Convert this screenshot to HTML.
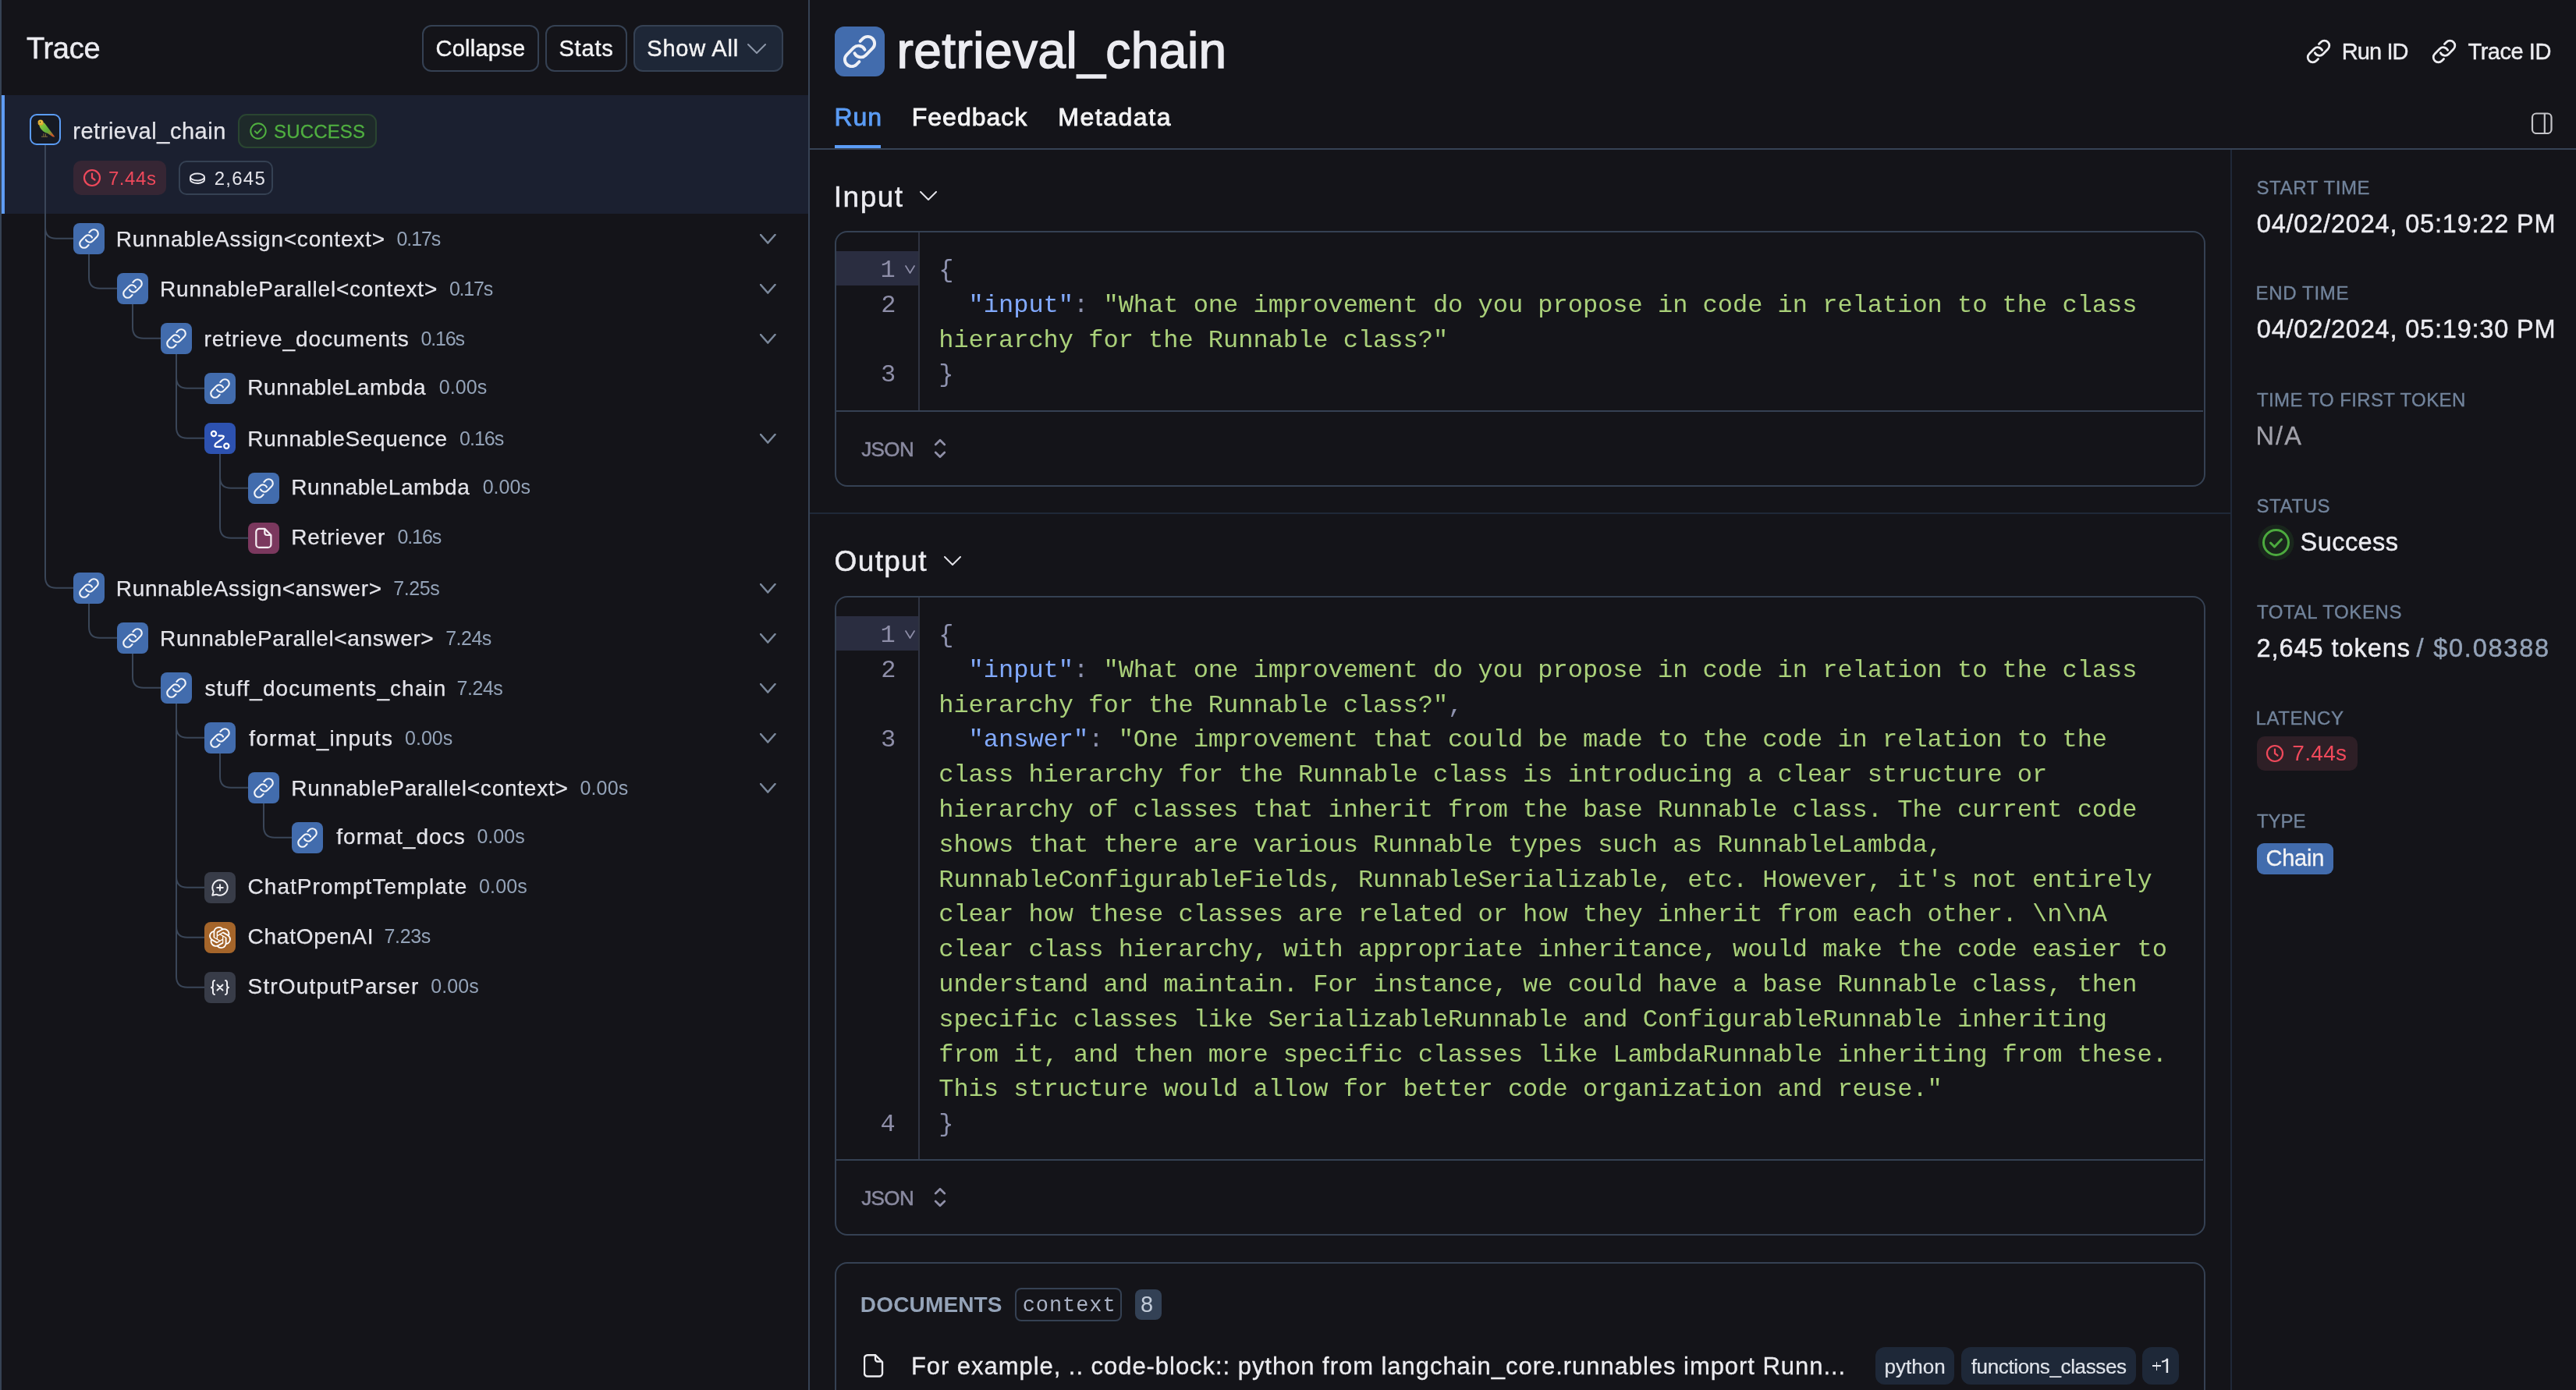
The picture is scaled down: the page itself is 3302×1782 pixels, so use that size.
<!DOCTYPE html>
<html><head><meta charset="utf-8"><style>
html,body{margin:0;padding:0;background:#141419;}
body{width:3302px;height:1782px;position:relative;overflow:hidden;font-family:"Liberation Sans",sans-serif;-webkit-font-smoothing:antialiased;}
</style></head><body><div style="position:absolute;left:0;top:0;width:3302px;height:1782px;will-change:transform;">
<div style="position:absolute;left:0px;top:0px;width:2px;height:1782px;background:#364254;"></div><div style="position:absolute;left:33.95px;top:42.93px;font-family:'Liberation Sans', sans-serif;font-size:38px;line-height:38px;color:#ececf1;white-space:pre;letter-spacing:-0.262px;-webkit-text-stroke:0.5px #ececf1;">Trace</div><div style="position:absolute;left:541px;top:32px;width:150px;height:60px;box-sizing:border-box;border:2px solid #354153;border-radius:12px;"></div><div style="position:absolute;left:558.50px;top:47.95px;font-family:'Liberation Sans', sans-serif;font-size:29px;line-height:29px;color:#f4f4f5;white-space:pre;letter-spacing:0.250px;-webkit-text-stroke:0.4px #f4f4f5;">Collapse</div><div style="position:absolute;left:699px;top:32px;width:105px;height:60px;box-sizing:border-box;border:2px solid #354153;border-radius:12px;"></div><div style="position:absolute;left:716.45px;top:47.95px;font-family:'Liberation Sans', sans-serif;font-size:29px;line-height:29px;color:#f4f4f5;white-space:pre;letter-spacing:0.812px;-webkit-text-stroke:0.4px #f4f4f5;">Stats</div><div style="position:absolute;left:812px;top:32px;width:192px;height:60px;box-sizing:border-box;border:2px solid #354153;border-radius:12px;background:#1e2737;"></div><div style="position:absolute;left:829.25px;top:47.95px;font-family:'Liberation Sans', sans-serif;font-size:29px;line-height:29px;color:#f4f4f5;white-space:pre;letter-spacing:0.800px;-webkit-text-stroke:0.4px #f4f4f5;">Show All</div><svg style="position:absolute;left:958px;top:56px;" width="24" height="13" viewBox="0 0 24 13" fill="none"><path d="M1 1 L12.0 12 L23 1" stroke="#8c96a8" stroke-width="2" stroke-linecap="round" stroke-linejoin="round"/></svg><div style="position:absolute;left:2px;top:122px;width:1034px;height:152px;background:#1b2030;"></div><div style="position:absolute;left:2px;top:122px;width:4px;height:152px;background:#5f9cf3;"></div><div style="position:absolute;left:38px;top:146px;width:40px;height:40px;box-sizing:border-box;border:2px solid #5b9cf5;border-radius:9px;background:#161a24;"></div><svg style="position:absolute;left:44px;top:150px;" width="30" height="30" viewBox="0 0 30 30" fill="none"><defs><linearGradient id="pg" x1="0" y1="0" x2="1" y2="1"><stop offset="0" stop-color="#9ccf3c"/><stop offset="0.55" stop-color="#5fae3a"/><stop offset="1" stop-color="#c8632a"/></linearGradient><radialGradient id="ph" cx="0.5" cy="0.4" r="0.6"><stop offset="0" stop-color="#f3d54a"/><stop offset="1" stop-color="#d99a2c"/></radialGradient></defs><path d="M6 9 C8 6 12 6 14 9 L20 17 L26 25 L24 25.5 L17 21 C13 20 9 17 7 13 Z" fill="url(#pg)"/><circle cx="8" cy="7.2" r="3.6" fill="url(#ph)"/><path d="M4.6 6.6 C3.4 6.8 3 8.5 3.8 9.6 L5.2 8.2 Z" fill="#3a3a3a"/><circle cx="7.6" cy="6.6" r="0.8" fill="#222"/><path d="M20 20 L26.5 26 L22 24 Z" fill="#d8452a"/><path d="M9 25.2 H17" stroke="#7d6a3a" stroke-width="1.1"/><path d="M12 21 V25 M14.5 21.5 V25" stroke="#8a7640" stroke-width="0.9"/></svg><div style="position:absolute;left:93.25px;top:154.45px;font-family:'Liberation Sans', sans-serif;font-size:29px;line-height:29px;color:#e4e4ea;white-space:pre;letter-spacing:0.536px;-webkit-text-stroke:0.25px #e4e4ea;">retrieval_chain</div><div style="position:absolute;left:305px;top:146px;width:178px;height:44px;box-sizing:border-box;border:2px solid #2a4531;border-radius:11px;background:#1e2a2a;"></div><svg style="position:absolute;left:319px;top:156px;" width="24" height="24" viewBox="0 0 24 24" fill="none"><circle cx="12" cy="12" r="9.7" stroke="#50b040" stroke-width="2"/><path d="M7.8 12.3 l2.8 2.8 l5.4 -5.6" stroke="#50b040" stroke-width="2" stroke-linecap="round" stroke-linejoin="round"/></svg><div style="position:absolute;left:351.00px;top:156.68px;font-family:'Liberation Sans', sans-serif;font-size:24px;line-height:24px;color:#50b040;white-space:pre;letter-spacing:0.167px;-webkit-text-stroke:0.3px #50b040;">SUCCESS</div><div style="position:absolute;left:94px;top:206px;width:119px;height:44px;border-radius:10px;background:#362634;"></div><svg style="position:absolute;left:106px;top:216px;" width="24" height="24" viewBox="0 0 24 24" fill="none"><circle cx="12" cy="12" r="10" stroke="#f0495b" stroke-width="2.2"/><path d="M12 6.5 V12 L15.5 14.5" stroke="#f0495b" stroke-width="2.2" stroke-linecap="round"/></svg><div style="position:absolute;left:138.95px;top:216.88px;font-family:'Liberation Sans', sans-serif;font-size:24px;line-height:24px;color:#f0495b;white-space:pre;letter-spacing:0.562px;">7.44s</div><div style="position:absolute;left:229px;top:206px;width:121px;height:44px;box-sizing:border-box;border:2px solid #354153;border-radius:10px;"></div><svg style="position:absolute;left:242px;top:218px;" width="22" height="22" viewBox="0 0 22 22" fill="none"><ellipse cx="11" cy="9" rx="9" ry="4.5" stroke="#e4e4ea" stroke-width="2"/><path d="M2 9 v3.5 c0 2.5 4 4.5 9 4.5 s9 -2 9 -4.5 V9" stroke="#e4e4ea" stroke-width="2"/></svg><div style="position:absolute;left:274.75px;top:216.88px;font-family:'Liberation Sans', sans-serif;font-size:24px;line-height:24px;color:#e4e4ea;white-space:pre;letter-spacing:1.250px;">2,645</div><svg style="position:absolute;left:0px;top:0px;" width="1036" height="1782" viewBox="0 0 1036 1782" fill="none"><path d="M58 186 V291.7 Q58 305.7 72 305.7 H94" stroke="#3a4658" stroke-width="2" fill="none"/><path d="M114 325.7 V355.7 Q114 369.7 128 369.7 H150" stroke="#3a4658" stroke-width="2" fill="none"/><path d="M170 389.7 V419.7 Q170 433.7 184 433.7 H206" stroke="#3a4658" stroke-width="2" fill="none"/><path d="M226 453.7 V483.7 Q226 497.7 240 497.7 H262" stroke="#3a4658" stroke-width="2" fill="none"/><path d="M226 453.7 V547.7 Q226 561.7 240 561.7 H262" stroke="#3a4658" stroke-width="2" fill="none"/><path d="M282 581.7 V611.7 Q282 625.7 296 625.7 H318" stroke="#3a4658" stroke-width="2" fill="none"/><path d="M282 581.7 V675.7 Q282 689.7 296 689.7 H318" stroke="#3a4658" stroke-width="2" fill="none"/><path d="M58 186 V739.7 Q58 753.7 72 753.7 H94" stroke="#3a4658" stroke-width="2" fill="none"/><path d="M114 773.7 V803.7 Q114 817.7 128 817.7 H150" stroke="#3a4658" stroke-width="2" fill="none"/><path d="M170 837.7 V867.7 Q170 881.7 184 881.7 H206" stroke="#3a4658" stroke-width="2" fill="none"/><path d="M226 901.7 V931.7 Q226 945.7 240 945.7 H262" stroke="#3a4658" stroke-width="2" fill="none"/><path d="M282 965.7 V995.7 Q282 1009.7 296 1009.7 H318" stroke="#3a4658" stroke-width="2" fill="none"/><path d="M338 1029.7 V1059.7 Q338 1073.7 352 1073.7 H374" stroke="#3a4658" stroke-width="2" fill="none"/><path d="M226 901.7 V1123.7 Q226 1137.7 240 1137.7 H262" stroke="#3a4658" stroke-width="2" fill="none"/><path d="M226 901.7 V1187.7 Q226 1201.7 240 1201.7 H262" stroke="#3a4658" stroke-width="2" fill="none"/><path d="M226 901.7 V1251.7 Q226 1265.7 240 1265.7 H262" stroke="#3a4658" stroke-width="2" fill="none"/></svg><svg style="position:absolute;left:94px;top:286px" width="40" height="40" viewBox="0 0 40 40"><rect width="40" height="40" rx="8" fill="#426cad"/><svg x="5.5" y="5.5" width="29" height="29" viewBox="0 0 24 24"><path transform="matrix(0 -1 -1 0 24 24)" fill="none" d="M13.19 8.688a4.5 4.5 0 0 1 1.242 7.244l-4.5 4.5a4.5 4.5 0 0 1-6.364-6.364l1.757-1.757m13.35-.622 1.757-1.757a4.5 4.5 0 0 0-6.364-6.364l-4.5 4.5a4.5 4.5 0 0 0 1.242 7.244" stroke="#f2f4f8" stroke-width="1.8" stroke-linecap="round" stroke-linejoin="round"/></svg></svg><div style="position:absolute;left:148.85px;top:292.89px;font-family:'Liberation Sans', sans-serif;font-size:28px;line-height:28px;color:#e4e4ea;white-space:pre;letter-spacing:0.784px;-webkit-text-stroke:0.25px #e4e4ea;">RunnableAssign&lt;context&gt;</div><div style="position:absolute;left:508.60px;top:294.13px;font-family:'Liberation Sans', sans-serif;font-size:25px;line-height:25px;color:#94a3b8;white-space:pre;letter-spacing:-1.150px;">0.17s</div><svg style="position:absolute;left:974px;top:300px;" width="20.5" height="12.5" viewBox="0 0 20.5 12.5" fill="none"><path d="M1 1 L10.25 11.5 L19.5 1" stroke="#7b889b" stroke-width="2.6" stroke-linecap="round" stroke-linejoin="round"/></svg><svg style="position:absolute;left:150px;top:350px" width="40" height="40" viewBox="0 0 40 40"><rect width="40" height="40" rx="8" fill="#426cad"/><svg x="5.5" y="5.5" width="29" height="29" viewBox="0 0 24 24"><path transform="matrix(0 -1 -1 0 24 24)" fill="none" d="M13.19 8.688a4.5 4.5 0 0 1 1.242 7.244l-4.5 4.5a4.5 4.5 0 0 1-6.364-6.364l1.757-1.757m13.35-.622 1.757-1.757a4.5 4.5 0 0 0-6.364-6.364l-4.5 4.5a4.5 4.5 0 0 0 1.242 7.244" stroke="#f2f4f8" stroke-width="1.8" stroke-linecap="round" stroke-linejoin="round"/></svg></svg><div style="position:absolute;left:205.05px;top:356.89px;font-family:'Liberation Sans', sans-serif;font-size:28px;line-height:28px;color:#e4e4ea;white-space:pre;letter-spacing:0.790px;-webkit-text-stroke:0.25px #e4e4ea;">RunnableParallel&lt;context&gt;</div><div style="position:absolute;left:575.90px;top:358.13px;font-family:'Liberation Sans', sans-serif;font-size:25px;line-height:25px;color:#94a3b8;white-space:pre;letter-spacing:-1.200px;">0.17s</div><svg style="position:absolute;left:974px;top:364px;" width="20.5" height="12.5" viewBox="0 0 20.5 12.5" fill="none"><path d="M1 1 L10.25 11.5 L19.5 1" stroke="#7b889b" stroke-width="2.6" stroke-linecap="round" stroke-linejoin="round"/></svg><svg style="position:absolute;left:206px;top:414px" width="40" height="40" viewBox="0 0 40 40"><rect width="40" height="40" rx="8" fill="#426cad"/><svg x="5.5" y="5.5" width="29" height="29" viewBox="0 0 24 24"><path transform="matrix(0 -1 -1 0 24 24)" fill="none" d="M13.19 8.688a4.5 4.5 0 0 1 1.242 7.244l-4.5 4.5a4.5 4.5 0 0 1-6.364-6.364l1.757-1.757m13.35-.622 1.757-1.757a4.5 4.5 0 0 0-6.364-6.364l-4.5 4.5a4.5 4.5 0 0 0 1.242 7.244" stroke="#f2f4f8" stroke-width="1.8" stroke-linecap="round" stroke-linejoin="round"/></svg></svg><div style="position:absolute;left:261.55px;top:420.89px;font-family:'Liberation Sans', sans-serif;font-size:28px;line-height:28px;color:#e4e4ea;white-space:pre;letter-spacing:0.956px;-webkit-text-stroke:0.25px #e4e4ea;">retrieve_documents</div><div style="position:absolute;left:539.50px;top:422.13px;font-family:'Liberation Sans', sans-serif;font-size:25px;line-height:25px;color:#94a3b8;white-space:pre;letter-spacing:-1.150px;">0.16s</div><svg style="position:absolute;left:974px;top:428px;" width="20.5" height="12.5" viewBox="0 0 20.5 12.5" fill="none"><path d="M1 1 L10.25 11.5 L19.5 1" stroke="#7b889b" stroke-width="2.6" stroke-linecap="round" stroke-linejoin="round"/></svg><svg style="position:absolute;left:262px;top:478px" width="40" height="40" viewBox="0 0 40 40"><rect width="40" height="40" rx="8" fill="#426cad"/><svg x="5.5" y="5.5" width="29" height="29" viewBox="0 0 24 24"><path transform="matrix(0 -1 -1 0 24 24)" fill="none" d="M13.19 8.688a4.5 4.5 0 0 1 1.242 7.244l-4.5 4.5a4.5 4.5 0 0 1-6.364-6.364l1.757-1.757m13.35-.622 1.757-1.757a4.5 4.5 0 0 0-6.364-6.364l-4.5 4.5a4.5 4.5 0 0 0 1.242 7.244" stroke="#f2f4f8" stroke-width="1.8" stroke-linecap="round" stroke-linejoin="round"/></svg></svg><div style="position:absolute;left:317.25px;top:482.99px;font-family:'Liberation Sans', sans-serif;font-size:28px;line-height:28px;color:#e4e4ea;white-space:pre;letter-spacing:0.562px;-webkit-text-stroke:0.25px #e4e4ea;">RunnableLambda</div><div style="position:absolute;left:562.70px;top:483.93px;font-family:'Liberation Sans', sans-serif;font-size:25px;line-height:25px;color:#94a3b8;white-space:pre;letter-spacing:0.100px;">0.00s</div><svg style="position:absolute;left:262px;top:542px" width="40" height="40" viewBox="0 0 40 40"><rect width="40" height="40" rx="8" fill="#2d52b0"/><g fill="none" stroke="#fff" stroke-width="2.2" stroke-linecap="round" stroke-linejoin="round"><circle cx="12" cy="14" r="3.1"/><circle cx="28.3" cy="29.8" r="3.1"/><path d="M18.4 16.6 H22.6 Q26.4 16.8 23.8 19.8 L14.6 26.6 Q11.6 30.8 15.6 30.9 H21.6"/></g></svg><div style="position:absolute;left:317.25px;top:548.89px;font-family:'Liberation Sans', sans-serif;font-size:28px;line-height:28px;color:#e4e4ea;white-space:pre;letter-spacing:0.663px;-webkit-text-stroke:0.25px #e4e4ea;">RunnableSequence</div><div style="position:absolute;left:589.10px;top:550.13px;font-family:'Liberation Sans', sans-serif;font-size:25px;line-height:25px;color:#94a3b8;white-space:pre;letter-spacing:-1.025px;">0.16s</div><svg style="position:absolute;left:974px;top:556px;" width="20.5" height="12.5" viewBox="0 0 20.5 12.5" fill="none"><path d="M1 1 L10.25 11.5 L19.5 1" stroke="#7b889b" stroke-width="2.6" stroke-linecap="round" stroke-linejoin="round"/></svg><svg style="position:absolute;left:318px;top:606px" width="40" height="40" viewBox="0 0 40 40"><rect width="40" height="40" rx="8" fill="#426cad"/><svg x="5.5" y="5.5" width="29" height="29" viewBox="0 0 24 24"><path transform="matrix(0 -1 -1 0 24 24)" fill="none" d="M13.19 8.688a4.5 4.5 0 0 1 1.242 7.244l-4.5 4.5a4.5 4.5 0 0 1-6.364-6.364l1.757-1.757m13.35-.622 1.757-1.757a4.5 4.5 0 0 0-6.364-6.364l-4.5 4.5a4.5 4.5 0 0 0 1.242 7.244" stroke="#f2f4f8" stroke-width="1.8" stroke-linecap="round" stroke-linejoin="round"/></svg></svg><div style="position:absolute;left:373.25px;top:610.99px;font-family:'Liberation Sans', sans-serif;font-size:28px;line-height:28px;color:#e4e4ea;white-space:pre;letter-spacing:0.577px;-webkit-text-stroke:0.25px #e4e4ea;">RunnableLambda</div><div style="position:absolute;left:618.70px;top:611.93px;font-family:'Liberation Sans', sans-serif;font-size:25px;line-height:25px;color:#94a3b8;white-space:pre;letter-spacing:0.025px;">0.00s</div><svg style="position:absolute;left:318px;top:670px" width="40" height="40" viewBox="0 0 40 40"><rect width="40" height="40" rx="8" fill="#7b385e"/><g fill="none" stroke="#f6eef3" stroke-width="2.2" stroke-linejoin="round"><path d="M14.3 7.9 H21.3 L29.4 16 V27.9 a4 4 0 0 1 -4 4 H14.3 a4 4 0 0 1 -4 -4 V11.9 a4 4 0 0 1 4 -4 Z"/><path d="M21.3 8.2 V13 a3 3 0 0 0 3 3 H29.2"/></g></svg><div style="position:absolute;left:373.25px;top:674.99px;font-family:'Liberation Sans', sans-serif;font-size:28px;line-height:28px;color:#e4e4ea;white-space:pre;letter-spacing:0.812px;-webkit-text-stroke:0.25px #e4e4ea;">Retriever</div><div style="position:absolute;left:509.40px;top:675.93px;font-family:'Liberation Sans', sans-serif;font-size:25px;line-height:25px;color:#94a3b8;white-space:pre;letter-spacing:-1.075px;">0.16s</div><svg style="position:absolute;left:94px;top:734px" width="40" height="40" viewBox="0 0 40 40"><rect width="40" height="40" rx="8" fill="#426cad"/><svg x="5.5" y="5.5" width="29" height="29" viewBox="0 0 24 24"><path transform="matrix(0 -1 -1 0 24 24)" fill="none" d="M13.19 8.688a4.5 4.5 0 0 1 1.242 7.244l-4.5 4.5a4.5 4.5 0 0 1-6.364-6.364l1.757-1.757m13.35-.622 1.757-1.757a4.5 4.5 0 0 0-6.364-6.364l-4.5 4.5a4.5 4.5 0 0 0 1.242 7.244" stroke="#f2f4f8" stroke-width="1.8" stroke-linecap="round" stroke-linejoin="round"/></svg></svg><div style="position:absolute;left:148.85px;top:740.89px;font-family:'Liberation Sans', sans-serif;font-size:28px;line-height:28px;color:#e4e4ea;white-space:pre;letter-spacing:0.636px;-webkit-text-stroke:0.25px #e4e4ea;">RunnableAssign&lt;answer&gt;</div><div style="position:absolute;left:504.35px;top:742.13px;font-family:'Liberation Sans', sans-serif;font-size:25px;line-height:25px;color:#94a3b8;white-space:pre;letter-spacing:-0.412px;">7.25s</div><svg style="position:absolute;left:974px;top:748px;" width="20.5" height="12.5" viewBox="0 0 20.5 12.5" fill="none"><path d="M1 1 L10.25 11.5 L19.5 1" stroke="#7b889b" stroke-width="2.6" stroke-linecap="round" stroke-linejoin="round"/></svg><svg style="position:absolute;left:150px;top:798px" width="40" height="40" viewBox="0 0 40 40"><rect width="40" height="40" rx="8" fill="#426cad"/><svg x="5.5" y="5.5" width="29" height="29" viewBox="0 0 24 24"><path transform="matrix(0 -1 -1 0 24 24)" fill="none" d="M13.19 8.688a4.5 4.5 0 0 1 1.242 7.244l-4.5 4.5a4.5 4.5 0 0 1-6.364-6.364l1.757-1.757m13.35-.622 1.757-1.757a4.5 4.5 0 0 0-6.364-6.364l-4.5 4.5a4.5 4.5 0 0 0 1.242 7.244" stroke="#f2f4f8" stroke-width="1.8" stroke-linecap="round" stroke-linejoin="round"/></svg></svg><div style="position:absolute;left:205.05px;top:804.89px;font-family:'Liberation Sans', sans-serif;font-size:28px;line-height:28px;color:#e4e4ea;white-space:pre;letter-spacing:0.628px;-webkit-text-stroke:0.25px #e4e4ea;">RunnableParallel&lt;answer&gt;</div><div style="position:absolute;left:571.15px;top:806.13px;font-family:'Liberation Sans', sans-serif;font-size:25px;line-height:25px;color:#94a3b8;white-space:pre;letter-spacing:-0.488px;">7.24s</div><svg style="position:absolute;left:974px;top:812px;" width="20.5" height="12.5" viewBox="0 0 20.5 12.5" fill="none"><path d="M1 1 L10.25 11.5 L19.5 1" stroke="#7b889b" stroke-width="2.6" stroke-linecap="round" stroke-linejoin="round"/></svg><svg style="position:absolute;left:206px;top:862px" width="40" height="40" viewBox="0 0 40 40"><rect width="40" height="40" rx="8" fill="#426cad"/><svg x="5.5" y="5.5" width="29" height="29" viewBox="0 0 24 24"><path transform="matrix(0 -1 -1 0 24 24)" fill="none" d="M13.19 8.688a4.5 4.5 0 0 1 1.242 7.244l-4.5 4.5a4.5 4.5 0 0 1-6.364-6.364l1.757-1.757m13.35-.622 1.757-1.757a4.5 4.5 0 0 0-6.364-6.364l-4.5 4.5a4.5 4.5 0 0 0 1.242 7.244" stroke="#f2f4f8" stroke-width="1.8" stroke-linecap="round" stroke-linejoin="round"/></svg></svg><div style="position:absolute;left:262.55px;top:868.89px;font-family:'Liberation Sans', sans-serif;font-size:28px;line-height:28px;color:#e4e4ea;white-space:pre;letter-spacing:1.060px;-webkit-text-stroke:0.25px #e4e4ea;">stuff_documents_chain</div><div style="position:absolute;left:585.45px;top:870.13px;font-family:'Liberation Sans', sans-serif;font-size:25px;line-height:25px;color:#94a3b8;white-space:pre;letter-spacing:-0.438px;">7.24s</div><svg style="position:absolute;left:974px;top:876px;" width="20.5" height="12.5" viewBox="0 0 20.5 12.5" fill="none"><path d="M1 1 L10.25 11.5 L19.5 1" stroke="#7b889b" stroke-width="2.6" stroke-linecap="round" stroke-linejoin="round"/></svg><svg style="position:absolute;left:262px;top:926px" width="40" height="40" viewBox="0 0 40 40"><rect width="40" height="40" rx="8" fill="#426cad"/><svg x="5.5" y="5.5" width="29" height="29" viewBox="0 0 24 24"><path transform="matrix(0 -1 -1 0 24 24)" fill="none" d="M13.19 8.688a4.5 4.5 0 0 1 1.242 7.244l-4.5 4.5a4.5 4.5 0 0 1-6.364-6.364l1.757-1.757m13.35-.622 1.757-1.757a4.5 4.5 0 0 0-6.364-6.364l-4.5 4.5a4.5 4.5 0 0 0 1.242 7.244" stroke="#f2f4f8" stroke-width="1.8" stroke-linecap="round" stroke-linejoin="round"/></svg></svg><div style="position:absolute;left:319.25px;top:932.89px;font-family:'Liberation Sans', sans-serif;font-size:28px;line-height:28px;color:#e4e4ea;white-space:pre;letter-spacing:1.183px;-webkit-text-stroke:0.25px #e4e4ea;">format_inputs</div><div style="position:absolute;left:519.10px;top:934.13px;font-family:'Liberation Sans', sans-serif;font-size:25px;line-height:25px;color:#94a3b8;white-space:pre;letter-spacing:-0.025px;">0.00s</div><svg style="position:absolute;left:974px;top:940px;" width="20.5" height="12.5" viewBox="0 0 20.5 12.5" fill="none"><path d="M1 1 L10.25 11.5 L19.5 1" stroke="#7b889b" stroke-width="2.6" stroke-linecap="round" stroke-linejoin="round"/></svg><svg style="position:absolute;left:318px;top:990px" width="40" height="40" viewBox="0 0 40 40"><rect width="40" height="40" rx="8" fill="#426cad"/><svg x="5.5" y="5.5" width="29" height="29" viewBox="0 0 24 24"><path transform="matrix(0 -1 -1 0 24 24)" fill="none" d="M13.19 8.688a4.5 4.5 0 0 1 1.242 7.244l-4.5 4.5a4.5 4.5 0 0 1-6.364-6.364l1.757-1.757m13.35-.622 1.757-1.757a4.5 4.5 0 0 0-6.364-6.364l-4.5 4.5a4.5 4.5 0 0 0 1.242 7.244" stroke="#f2f4f8" stroke-width="1.8" stroke-linecap="round" stroke-linejoin="round"/></svg></svg><div style="position:absolute;left:373.25px;top:996.89px;font-family:'Liberation Sans', sans-serif;font-size:28px;line-height:28px;color:#e4e4ea;white-space:pre;letter-spacing:0.765px;-webkit-text-stroke:0.25px #e4e4ea;">RunnableParallel&lt;context&gt;</div><div style="position:absolute;left:743.50px;top:998.13px;font-family:'Liberation Sans', sans-serif;font-size:25px;line-height:25px;color:#94a3b8;white-space:pre;letter-spacing:0.125px;">0.00s</div><svg style="position:absolute;left:974px;top:1004px;" width="20.5" height="12.5" viewBox="0 0 20.5 12.5" fill="none"><path d="M1 1 L10.25 11.5 L19.5 1" stroke="#7b889b" stroke-width="2.6" stroke-linecap="round" stroke-linejoin="round"/></svg><svg style="position:absolute;left:374px;top:1054px" width="40" height="40" viewBox="0 0 40 40"><rect width="40" height="40" rx="8" fill="#426cad"/><svg x="5.5" y="5.5" width="29" height="29" viewBox="0 0 24 24"><path transform="matrix(0 -1 -1 0 24 24)" fill="none" d="M13.19 8.688a4.5 4.5 0 0 1 1.242 7.244l-4.5 4.5a4.5 4.5 0 0 1-6.364-6.364l1.757-1.757m13.35-.622 1.757-1.757a4.5 4.5 0 0 0-6.364-6.364l-4.5 4.5a4.5 4.5 0 0 0 1.242 7.244" stroke="#f2f4f8" stroke-width="1.8" stroke-linecap="round" stroke-linejoin="round"/></svg></svg><div style="position:absolute;left:431.25px;top:1058.99px;font-family:'Liberation Sans', sans-serif;font-size:28px;line-height:28px;color:#e4e4ea;white-space:pre;letter-spacing:1.045px;-webkit-text-stroke:0.25px #e4e4ea;">format_docs</div><div style="position:absolute;left:611.40px;top:1059.93px;font-family:'Liberation Sans', sans-serif;font-size:25px;line-height:25px;color:#94a3b8;white-space:pre;letter-spacing:0.025px;">0.00s</div><svg style="position:absolute;left:262px;top:1118px" width="40" height="40" viewBox="0 0 40 40"><rect width="40" height="40" rx="8" fill="#383c48"/><svg x="7" y="7" width="26" height="26" viewBox="0 0 24 24" fill="none" stroke="#f0f0f4" stroke-width="1.8" stroke-linecap="round" stroke-linejoin="round"><path d="M12 3 a9 9 0 1 1 -4.2 17 L3 21 L4.3 16.5 A9 9 0 0 1 12 3 Z"/><path d="M12 8.5 v7 M8.5 12 h7"/></svg></svg><div style="position:absolute;left:317.55px;top:1122.99px;font-family:'Liberation Sans', sans-serif;font-size:28px;line-height:28px;color:#e4e4ea;white-space:pre;letter-spacing:1.044px;-webkit-text-stroke:0.25px #e4e4ea;">ChatPromptTemplate</div><div style="position:absolute;left:614.00px;top:1123.93px;font-family:'Liberation Sans', sans-serif;font-size:25px;line-height:25px;color:#94a3b8;white-space:pre;letter-spacing:0.175px;">0.00s</div><svg style="position:absolute;left:262px;top:1182px" width="40" height="40" viewBox="0 0 40 40"><rect width="40" height="40" rx="8" fill="#a5652a"/><svg x="6" y="6" width="28" height="28" viewBox="0 0 24 24"><path fill="#fff" d="M22.2819 9.8211a5.9847 5.9847 0 0 0-.5157-4.9108 6.0462 6.0462 0 0 0-6.5098-2.9A6.0651 6.0651 0 0 0 4.9807 4.1818a5.9847 5.9847 0 0 0-3.9977 2.9 6.0462 6.0462 0 0 0 .7427 7.0966 5.98 5.98 0 0 0 .511 4.9107 6.051 6.051 0 0 0 6.5146 2.9001A5.9847 5.9847 0 0 0 13.2599 24a6.0557 6.0557 0 0 0 5.7718-4.2058 5.9894 5.9894 0 0 0 3.9977-2.9001 6.0557 6.0557 0 0 0-.7475-7.0729zm-9.022 12.6081a4.4755 4.4755 0 0 1-2.8764-1.0408l.1419-.0804 4.7783-2.7582a.7948.7948 0 0 0 .3927-.6813v-6.7369l2.02 1.1686a.071.071 0 0 1 .038.052v5.5826a4.504 4.504 0 0 1-4.4945 4.4944zm-9.6607-4.1254a4.4708 4.4708 0 0 1-.5346-3.0137l.142.0852 4.783 2.7582a.7712.7712 0 0 0 .7806 0l5.8428-3.3685v2.3324a.0804.0804 0 0 1-.0332.0615L9.74 19.9502a4.4992 4.4992 0 0 1-6.1408-1.6464zM2.3408 7.8956a4.485 4.485 0 0 1 2.3655-1.9728V11.6a.7664.7664 0 0 0 .3879.6765l5.8144 3.3543-2.0201 1.1685a.0757.0757 0 0 1-.071 0l-4.8303-2.7865A4.504 4.504 0 0 1 2.3408 7.872zm16.5963 3.8558L13.1038 8.364 15.1192 7.2a.0757.0757 0 0 1 .071 0l4.8303 2.7913a4.4944 4.4944 0 0 1-.6765 8.1042v-5.6772a.79.79 0 0 0-.407-.667zm2.0107-3.0231l-.142-.0852-4.7735-2.7818a.7759.7759 0 0 0-.7854 0L9.409 9.2297V6.8974a.0662.0662 0 0 1 .0284-.0615l4.8303-2.7866a4.4992 4.4992 0 0 1 6.6802 4.66zM8.3065 12.863l-2.02-1.1638a.0804.0804 0 0 1-.038-.0567V6.0742a4.4992 4.4992 0 0 1 7.3757-3.4537l-.142.0805L8.704 5.459a.7948.7948 0 0 0-.3927.6813zm1.0976-2.3654l2.602-1.4998 2.6069 1.4998v2.9994l-2.5974 1.4997-2.6067-1.4997Z"/></svg></svg><div style="position:absolute;left:317.55px;top:1186.99px;font-family:'Liberation Sans', sans-serif;font-size:28px;line-height:28px;color:#e4e4ea;white-space:pre;letter-spacing:0.761px;-webkit-text-stroke:0.25px #e4e4ea;">ChatOpenAI</div><div style="position:absolute;left:492.55px;top:1187.93px;font-family:'Liberation Sans', sans-serif;font-size:25px;line-height:25px;color:#94a3b8;white-space:pre;letter-spacing:-0.363px;">7.23s</div><svg style="position:absolute;left:262px;top:1246px" width="40" height="40" viewBox="0 0 40 40"><rect width="40" height="40" rx="8" fill="#383c48"/><svg x="7" y="8" width="26" height="24" viewBox="0 0 26 24" fill="none" stroke="#f0f0f4" stroke-width="2" stroke-linecap="round" stroke-linejoin="round"><path d="M6 3 C3.5 3 4 6 4 9 C4 11 3 12 2 12 C3 12 4 13 4 15 C4 18 3.5 21 6 21"/><path d="M20 3 C22.5 3 22 6 22 9 C22 11 23 12 24 12 C23 12 22 13 22 15 C22 18 22.5 21 20 21"/><path d="M9.5 8.5 L16.5 15.5 M16.5 8.5 L9.5 15.5"/></svg></svg><div style="position:absolute;left:317.55px;top:1250.99px;font-family:'Liberation Sans', sans-serif;font-size:28px;line-height:28px;color:#e4e4ea;white-space:pre;letter-spacing:1.182px;-webkit-text-stroke:0.25px #e4e4ea;">StrOutputParser</div><div style="position:absolute;left:552.20px;top:1251.93px;font-family:'Liberation Sans', sans-serif;font-size:25px;line-height:25px;color:#94a3b8;white-space:pre;letter-spacing:0.100px;">0.00s</div><div style="position:absolute;left:1036px;top:0px;width:2px;height:1782px;background:#364254;"></div><svg style="position:absolute;left:1070px;top:34px" width="64" height="64" viewBox="0 0 64 64"><rect width="64" height="64" rx="12" fill="#426cad"/><svg x="8.5" y="8.5" width="47" height="47" viewBox="0 0 24 24"><path transform="matrix(0 -1 -1 0 24 24)" fill="none" d="M13.19 8.688a4.5 4.5 0 0 1 1.242 7.244l-4.5 4.5a4.5 4.5 0 0 1-6.364-6.364l1.757-1.757m13.35-.622 1.757-1.757a4.5 4.5 0 0 0-6.364-6.364l-4.5 4.5a4.5 4.5 0 0 0 1.242 7.244" stroke="#eef0f6" stroke-width="2.0" stroke-linecap="round" stroke-linejoin="round"/></svg></svg><div style="position:absolute;left:1149.45px;top:33.31px;font-family:'Liberation Sans', sans-serif;font-size:64px;line-height:64px;color:#ececf1;white-space:pre;letter-spacing:0.464px;-webkit-text-stroke:1.4px #ececf1;">retrieval_chain</div><svg style="position:absolute;left:2955px;top:49px;" width="34" height="34" viewBox="0 0 34 34" fill="none"><svg viewBox="0 0 24 24" width="34" height="34"><path transform="matrix(0 -1 -1 0 24 24)" fill="none" d="M13.19 8.688a4.5 4.5 0 0 1 1.242 7.244l-4.5 4.5a4.5 4.5 0 0 1-6.364-6.364l1.757-1.757m13.35-.622 1.757-1.757a4.5 4.5 0 0 0-6.364-6.364l-4.5 4.5a4.5 4.5 0 0 0 1.242 7.244" stroke="#ececf0" stroke-width="1.95" stroke-linecap="round" stroke-linejoin="round"/></svg></svg><div style="position:absolute;left:3001.75px;top:51.65px;font-family:'Liberation Sans', sans-serif;font-size:29px;line-height:29px;color:#ececf0;white-space:pre;letter-spacing:-0.900px;-webkit-text-stroke:0.4px #ececf0;">Run ID</div><svg style="position:absolute;left:3116px;top:49px;" width="34" height="34" viewBox="0 0 34 34" fill="none"><svg viewBox="0 0 24 24" width="34" height="34"><path transform="matrix(0 -1 -1 0 24 24)" fill="none" d="M13.19 8.688a4.5 4.5 0 0 1 1.242 7.244l-4.5 4.5a4.5 4.5 0 0 1-6.364-6.364l1.757-1.757m13.35-.622 1.757-1.757a4.5 4.5 0 0 0-6.364-6.364l-4.5 4.5a4.5 4.5 0 0 0 1.242 7.244" stroke="#ececf0" stroke-width="1.95" stroke-linecap="round" stroke-linejoin="round"/></svg></svg><div style="position:absolute;left:3163.50px;top:51.65px;font-family:'Liberation Sans', sans-serif;font-size:29px;line-height:29px;color:#ececf0;white-space:pre;letter-spacing:-0.464px;-webkit-text-stroke:0.4px #ececf0;">Trace ID</div><svg style="position:absolute;left:3244px;top:144px;" width="28" height="28" viewBox="0 0 28 28" fill="none"><rect x="2" y="1.5" width="24.5" height="25.5" rx="5" stroke="#c4c4c8" stroke-width="2.2"/><path d="M17.8 2 V26.5" stroke="#c4c4c8" stroke-width="2.2"/></svg><div style="position:absolute;left:1069.50px;top:134.16px;font-family:'Liberation Sans', sans-serif;font-size:32px;line-height:32px;color:#5b9cf5;white-space:pre;letter-spacing:0.875px;-webkit-text-stroke:0.9px #5b9cf5;">Run</div><div style="position:absolute;left:1168.75px;top:134.16px;font-family:'Liberation Sans', sans-serif;font-size:32px;line-height:32px;color:#f4f4f5;white-space:pre;letter-spacing:1.000px;-webkit-text-stroke:0.9px #f4f4f5;">Feedback</div><div style="position:absolute;left:1356.25px;top:134.16px;font-family:'Liberation Sans', sans-serif;font-size:32px;line-height:32px;color:#f4f4f5;white-space:pre;letter-spacing:1.536px;-webkit-text-stroke:0.9px #f4f4f5;">Metadata</div><div style="position:absolute;left:1070px;top:186px;width:59px;height:4px;background:#5b9cf5;"></div><div style="position:absolute;left:1038px;top:190px;width:2264px;height:2px;background:#364254;"></div><div style="position:absolute;left:2859px;top:192px;width:2px;height:1590px;background:#1f2838;"></div><div style="position:absolute;left:1038px;top:657px;width:1821px;height:2px;background:#1f2838;"></div><div style="position:absolute;left:1068.75px;top:234.17px;font-family:'Liberation Sans', sans-serif;font-size:37px;line-height:37px;color:#ececf1;white-space:pre;letter-spacing:1.512px;-webkit-text-stroke:0.5px #ececf1;">Input</div><svg style="position:absolute;left:1179px;top:245px;" width="22" height="12" viewBox="0 0 22 12" fill="none"><path d="M1 1 L11.0 11 L21 1" stroke="#e2e2e8" stroke-width="2" stroke-linecap="round" stroke-linejoin="round"/></svg><div style="position:absolute;left:1069.50px;top:700.67px;font-family:'Liberation Sans', sans-serif;font-size:37px;line-height:37px;color:#ececf1;white-space:pre;letter-spacing:1.400px;-webkit-text-stroke:0.5px #ececf1;">Output</div><svg style="position:absolute;left:1210px;top:713px;" width="22" height="12" viewBox="0 0 22 12" fill="none"><path d="M1 1 L11.0 11 L21 1" stroke="#e2e2e8" stroke-width="2" stroke-linecap="round" stroke-linejoin="round"/></svg><div style="position:absolute;left:1070px;top:296px;width:1757px;height:328px;box-sizing:border-box;border:2px solid #354153;border-radius:16px;"></div><div style="position:absolute;left:1177px;top:298px;width:2px;height:228px;background:#2f3341;"></div><div style="position:absolute;left:1072px;top:526px;width:1752px;height:2px;background:#354153;"></div><div style="position:absolute;left:1072px;top:322px;width:105px;height:44px;background:#2a2d40;"></div><div style="position:absolute;left:1128.55px;top:331.08px;font-family:'Liberation Mono', monospace;font-size:32px;line-height:32px;color:#8e8ea8;white-space:pre;">1</div><div style="position:absolute;left:1129.30px;top:375.88px;font-family:'Liberation Mono', monospace;font-size:32px;line-height:32px;color:#8e8ea8;white-space:pre;">2</div><div style="position:absolute;left:1129.05px;top:465.48px;font-family:'Liberation Mono', monospace;font-size:32px;line-height:32px;color:#8e8ea8;white-space:pre;">3</div><svg style="position:absolute;left:1159.5px;top:339.5px;" width="13" height="11" viewBox="0 0 13 11" fill="none"><path d="M1 1 L6.5 10 L12 1" stroke="#8e8ea8" stroke-width="1.7" stroke-linecap="round" stroke-linejoin="round"/></svg><div style="position:absolute;left:1203.2px;top:331.08px;font-family:'Liberation Mono',monospace;font-size:32px;line-height:32px;white-space:pre;letter-spacing:0px"><span style="color:#8f93b0">{</span></div><div style="position:absolute;left:1203.2px;top:375.88px;font-family:'Liberation Mono',monospace;font-size:32px;line-height:32px;white-space:pre;letter-spacing:0px"><span style="color:#8f93b0">  </span><span style="color:#82aaff">&quot;input&quot;</span><span style="color:#8f93b0">: </span><span style="color:#aad17a">&quot;What one improvement do you propose in code in relation to the class</span></div><div style="position:absolute;left:1203.2px;top:420.68px;font-family:'Liberation Mono',monospace;font-size:32px;line-height:32px;white-space:pre;letter-spacing:0px"><span style="color:#aad17a">hierarchy for the Runnable class?&quot;</span></div><div style="position:absolute;left:1203.2px;top:465.48px;font-family:'Liberation Mono',monospace;font-size:32px;line-height:32px;white-space:pre;letter-spacing:0px"><span style="color:#8f93b0">}</span></div><div style="position:absolute;left:1104.20px;top:562.99px;font-family:'Liberation Sans', sans-serif;font-size:26px;line-height:26px;color:#8a8aa0;white-space:pre;letter-spacing:-0.583px;-webkit-text-stroke:0.5px #8a8aa0;">JSON</div><svg style="position:absolute;left:1197px;top:562px;" width="16" height="26" viewBox="0 0 16 26" fill="none"><path d="M2.2 8 L8 2.2 L13.8 8 M2.2 18 L8 23.8 L13.8 18" stroke="#9090a8" stroke-width="2.7" stroke-linecap="round" stroke-linejoin="round"/></svg><div style="position:absolute;left:1070px;top:764px;width:1757px;height:820px;box-sizing:border-box;border:2px solid #354153;border-radius:16px;"></div><div style="position:absolute;left:1177px;top:766px;width:2px;height:720px;background:#2f3341;"></div><div style="position:absolute;left:1072px;top:1486px;width:1752px;height:2px;background:#354153;"></div><div style="position:absolute;left:1072px;top:790px;width:105px;height:44px;background:#2a2d40;"></div><div style="position:absolute;left:1128.55px;top:799.08px;font-family:'Liberation Mono', monospace;font-size:32px;line-height:32px;color:#8e8ea8;white-space:pre;">1</div><div style="position:absolute;left:1129.30px;top:843.88px;font-family:'Liberation Mono', monospace;font-size:32px;line-height:32px;color:#8e8ea8;white-space:pre;">2</div><div style="position:absolute;left:1129.05px;top:933.48px;font-family:'Liberation Mono', monospace;font-size:32px;line-height:32px;color:#8e8ea8;white-space:pre;">3</div><div style="position:absolute;left:1128.55px;top:1426.28px;font-family:'Liberation Mono', monospace;font-size:32px;line-height:32px;color:#8e8ea8;white-space:pre;">4</div><svg style="position:absolute;left:1159.5px;top:807.5px;" width="13" height="11" viewBox="0 0 13 11" fill="none"><path d="M1 1 L6.5 10 L12 1" stroke="#8e8ea8" stroke-width="1.7" stroke-linecap="round" stroke-linejoin="round"/></svg><div style="position:absolute;left:1203.2px;top:799.08px;font-family:'Liberation Mono',monospace;font-size:32px;line-height:32px;white-space:pre;letter-spacing:0px"><span style="color:#8f93b0">{</span></div><div style="position:absolute;left:1203.2px;top:843.88px;font-family:'Liberation Mono',monospace;font-size:32px;line-height:32px;white-space:pre;letter-spacing:0px"><span style="color:#8f93b0">  </span><span style="color:#82aaff">&quot;input&quot;</span><span style="color:#8f93b0">: </span><span style="color:#aad17a">&quot;What one improvement do you propose in code in relation to the class</span></div><div style="position:absolute;left:1203.2px;top:888.68px;font-family:'Liberation Mono',monospace;font-size:32px;line-height:32px;white-space:pre;letter-spacing:0px"><span style="color:#aad17a">hierarchy for the Runnable class?&quot;</span><span style="color:#8f93b0">,</span></div><div style="position:absolute;left:1203.2px;top:933.48px;font-family:'Liberation Mono',monospace;font-size:32px;line-height:32px;white-space:pre;letter-spacing:0px"><span style="color:#8f93b0">  </span><span style="color:#82aaff">&quot;answer&quot;</span><span style="color:#8f93b0">: </span><span style="color:#aad17a">&quot;One improvement that could be made to the code in relation to the</span></div><div style="position:absolute;left:1203.2px;top:978.28px;font-family:'Liberation Mono',monospace;font-size:32px;line-height:32px;white-space:pre;letter-spacing:0px"><span style="color:#aad17a">class hierarchy for the Runnable class is introducing a clear structure or</span></div><div style="position:absolute;left:1203.2px;top:1023.08px;font-family:'Liberation Mono',monospace;font-size:32px;line-height:32px;white-space:pre;letter-spacing:0px"><span style="color:#aad17a">hierarchy of classes that inherit from the base Runnable class. The current code</span></div><div style="position:absolute;left:1203.2px;top:1067.88px;font-family:'Liberation Mono',monospace;font-size:32px;line-height:32px;white-space:pre;letter-spacing:0px"><span style="color:#aad17a">shows that there are various Runnable types such as RunnableLambda,</span></div><div style="position:absolute;left:1203.2px;top:1112.68px;font-family:'Liberation Mono',monospace;font-size:32px;line-height:32px;white-space:pre;letter-spacing:0px"><span style="color:#aad17a">RunnableConfigurableFields, RunnableSerializable, etc. However, it&#x27;s not entirely</span></div><div style="position:absolute;left:1203.2px;top:1157.48px;font-family:'Liberation Mono',monospace;font-size:32px;line-height:32px;white-space:pre;letter-spacing:0px"><span style="color:#aad17a">clear how these classes are related or how they inherit from each other. \n\nA</span></div><div style="position:absolute;left:1203.2px;top:1202.28px;font-family:'Liberation Mono',monospace;font-size:32px;line-height:32px;white-space:pre;letter-spacing:0px"><span style="color:#aad17a">clear class hierarchy, with appropriate inheritance, would make the code easier to</span></div><div style="position:absolute;left:1203.2px;top:1247.08px;font-family:'Liberation Mono',monospace;font-size:32px;line-height:32px;white-space:pre;letter-spacing:0px"><span style="color:#aad17a">understand and maintain. For instance, we could have a base Runnable class, then</span></div><div style="position:absolute;left:1203.2px;top:1291.88px;font-family:'Liberation Mono',monospace;font-size:32px;line-height:32px;white-space:pre;letter-spacing:0px"><span style="color:#aad17a">specific classes like SerializableRunnable and ConfigurableRunnable inheriting</span></div><div style="position:absolute;left:1203.2px;top:1336.68px;font-family:'Liberation Mono',monospace;font-size:32px;line-height:32px;white-space:pre;letter-spacing:0px"><span style="color:#aad17a">from it, and then more specific classes like LambdaRunnable inheriting from these.</span></div><div style="position:absolute;left:1203.2px;top:1381.48px;font-family:'Liberation Mono',monospace;font-size:32px;line-height:32px;white-space:pre;letter-spacing:0px"><span style="color:#aad17a">This structure would allow for better code organization and reuse.&quot;</span></div><div style="position:absolute;left:1203.2px;top:1426.28px;font-family:'Liberation Mono',monospace;font-size:32px;line-height:32px;white-space:pre;letter-spacing:0px"><span style="color:#8f93b0">}</span></div><div style="position:absolute;left:1104.20px;top:1522.99px;font-family:'Liberation Sans', sans-serif;font-size:26px;line-height:26px;color:#8a8aa0;white-space:pre;letter-spacing:-0.583px;-webkit-text-stroke:0.5px #8a8aa0;">JSON</div><svg style="position:absolute;left:1197px;top:1522px;" width="16" height="26" viewBox="0 0 16 26" fill="none"><path d="M2.2 8 L8 2.2 L13.8 8 M2.2 18 L8 23.8 L13.8 18" stroke="#9090a8" stroke-width="2.7" stroke-linecap="round" stroke-linejoin="round"/></svg><div style="position:absolute;left:1070px;top:1618px;width:1757px;height:400px;box-sizing:border-box;border:2px solid #354153;border-radius:16px;"></div><div style="position:absolute;left:1102.85px;top:1659.09px;font-family:'Liberation Sans', sans-serif;font-size:28px;line-height:28px;color:#94a3b8;white-space:pre;letter-spacing:0.156px;font-weight:bold;">DOCUMENTS</div><div style="position:absolute;left:1301px;top:1651px;width:137px;height:43px;box-sizing:border-box;border:2px solid #354153;border-radius:8px;"></div><div style="position:absolute;left:1310.75px;top:1661.32px;font-family:'Liberation Mono', monospace;font-size:27px;line-height:27px;color:#a9b1c4;white-space:pre;letter-spacing:0.917px;">context</div><div style="position:absolute;left:1455px;top:1653px;width:34px;height:39px;background:#334155;border-radius:8px;"></div><div style="position:absolute;left:1462.05px;top:1658.45px;font-family:'Liberation Sans', sans-serif;font-size:29px;line-height:29px;color:#c2cbd8;white-space:pre;">8</div><svg style="position:absolute;left:1107px;top:1735px;" width="26" height="32" viewBox="0 0 26 32" fill="none"><path d="M5 2.2 H15 L24 11 V25.5 a4 4 0 0 1 -4 4 H5 a4 4 0 0 1 -4 -4 V6.2 a4 4 0 0 1 4 -4 Z" stroke="#ececf0" stroke-width="2.4" stroke-linejoin="round"/><path d="M15 2.5 V7.5 a3 3 0 0 0 3 3 H23.5" stroke="#ececf0" stroke-width="2.4"/></svg><div style="position:absolute;left:1167.90px;top:1735.55px;font-family:'Liberation Sans', sans-serif;font-size:31px;line-height:31px;color:#ececf0;white-space:pre;letter-spacing:0.956px;-webkit-text-stroke:0.3px #ececf0;">For example, .. code-block:: python from langchain_core.runnables import Runn...</div><div style="position:absolute;left:2404px;top:1727px;width:101px;height:48px;background:#1e2838;border-radius:12px;"></div><div style="position:absolute;left:2415.50px;top:1738.99px;font-family:'Liberation Sans', sans-serif;font-size:26px;line-height:26px;color:#dfe3ea;white-space:pre;letter-spacing:0.050px;-webkit-text-stroke:0.2px #dfe3ea;">python</div><div style="position:absolute;left:2514px;top:1727px;width:224px;height:48px;background:#1e2838;border-radius:12px;"></div><div style="position:absolute;left:2526.75px;top:1738.99px;font-family:'Liberation Sans', sans-serif;font-size:26px;line-height:26px;color:#dfe3ea;white-space:pre;letter-spacing:-0.375px;-webkit-text-stroke:0.2px #dfe3ea;">functions_classes</div><div style="position:absolute;left:2746px;top:1727px;width:47px;height:48px;background:#1e2838;border-radius:12px;"></div><div style="position:absolute;left:2759px;top:1750.4px;width:11px;height:1.8px;background:#e6e8ee;"></div><div style="position:absolute;left:2763.6px;top:1745.9px;width:1.8px;height:10.8px;background:#e6e8ee;"></div><svg style="position:absolute;left:2768px;top:1740px;" width="14" height="22" viewBox="0 0 14 22" fill="none"><path d="M9.9 2.3 V20" stroke="#e6e8ee" stroke-width="2.5"/><path d="M4.2 5.6 C6.5 5.2 8.6 4.2 9.9 2.6" stroke="#e6e8ee" stroke-width="2.2" stroke-linecap="square"/></svg><div style="position:absolute;left:2892.50px;top:228.68px;font-family:'Liberation Sans', sans-serif;font-size:24px;line-height:24px;color:#72849c;white-space:pre;letter-spacing:0.611px;-webkit-text-stroke:0.35px #72849c;">START TIME</div><div style="position:absolute;left:2892.75px;top:271.48px;font-family:'Liberation Sans', sans-serif;font-size:32.5px;line-height:32.5px;color:#ececf1;white-space:pre;letter-spacing:0.807px;-webkit-text-stroke:0.45px #ececf1;">04/02/2024, 05:19:22 PM</div><div style="position:absolute;left:2891.50px;top:363.98px;font-family:'Liberation Sans', sans-serif;font-size:24px;line-height:24px;color:#72849c;white-space:pre;letter-spacing:0.679px;-webkit-text-stroke:0.35px #72849c;">END TIME</div><div style="position:absolute;left:2892.75px;top:406.48px;font-family:'Liberation Sans', sans-serif;font-size:32.5px;line-height:32.5px;color:#ececf1;white-space:pre;letter-spacing:0.807px;-webkit-text-stroke:0.45px #ececf1;">04/02/2024, 05:19:30 PM</div><div style="position:absolute;left:2893.00px;top:500.68px;font-family:'Liberation Sans', sans-serif;font-size:24px;line-height:24px;color:#72849c;white-space:pre;letter-spacing:0.375px;-webkit-text-stroke:0.35px #72849c;">TIME TO FIRST TOKEN</div><div style="position:absolute;left:2891.50px;top:543.28px;font-family:'Liberation Sans', sans-serif;font-size:32.5px;line-height:32.5px;color:#a1a1aa;white-space:pre;letter-spacing:2.125px;-webkit-text-stroke:0.3px #a1a1aa;">N/A</div><div style="position:absolute;left:2892.50px;top:636.68px;font-family:'Liberation Sans', sans-serif;font-size:24px;line-height:24px;color:#72849c;white-space:pre;letter-spacing:0.600px;-webkit-text-stroke:0.35px #72849c;">STATUS</div><svg style="position:absolute;left:2894px;top:672px;" width="47" height="47" viewBox="0 0 47 47" fill="none"><circle cx="23.5" cy="23.5" r="23" fill="#19261c"/><circle cx="23.5" cy="23.5" r="16" stroke="#4caa3e" stroke-width="3"/><path d="M16.5 24 l5 5 l9 -9.5" stroke="#4caa3e" stroke-width="3" stroke-linecap="round" stroke-linejoin="round"/></svg><div style="position:absolute;left:2948.50px;top:679.08px;font-family:'Liberation Sans', sans-serif;font-size:32.5px;line-height:32.5px;color:#ececf1;white-space:pre;letter-spacing:0.458px;-webkit-text-stroke:0.45px #ececf1;">Success</div><div style="position:absolute;left:2893.00px;top:772.68px;font-family:'Liberation Sans', sans-serif;font-size:24px;line-height:24px;color:#72849c;white-space:pre;letter-spacing:0.614px;-webkit-text-stroke:0.35px #72849c;">TOTAL TOKENS</div><div style="position:absolute;left:2892.50px;top:815.48px;font-family:'Liberation Sans', sans-serif;font-size:32.5px;line-height:32.5px;color:#ececf1;white-space:pre;letter-spacing:0.955px;-webkit-text-stroke:0.45px #ececf1;">2,645 tokens</div><div style="position:absolute;left:3097.50px;top:815.48px;font-family:'Liberation Sans', sans-serif;font-size:32.5px;line-height:32.5px;color:#94a3b8;white-space:pre;letter-spacing:1.783px;-webkit-text-stroke:0.45px #94a3b8;">/ $0.08388</div><div style="position:absolute;left:2891.50px;top:909.08px;font-family:'Liberation Sans', sans-serif;font-size:24px;line-height:24px;color:#72849c;white-space:pre;letter-spacing:0.583px;-webkit-text-stroke:0.35px #72849c;">LATENCY</div><div style="position:absolute;left:2893px;top:944px;width:129px;height:44px;background:#2e1f26;border-radius:10px;"></div><svg style="position:absolute;left:2904px;top:954px;" width="24" height="24" viewBox="0 0 24 24" fill="none"><circle cx="12" cy="12" r="10" stroke="#f0495b" stroke-width="2.2"/><path d="M12 6.5 V12 L15.5 14.5" stroke="#f0495b" stroke-width="2.2" stroke-linecap="round"/></svg><div style="position:absolute;left:2938.35px;top:952.29px;font-family:'Liberation Sans', sans-serif;font-size:28px;line-height:28px;color:#f0495b;white-space:pre;letter-spacing:0.288px;">7.44s</div><div style="position:absolute;left:2893.00px;top:1040.68px;font-family:'Liberation Sans', sans-serif;font-size:24px;line-height:24px;color:#72849c;white-space:pre;letter-spacing:-0.083px;-webkit-text-stroke:0.35px #72849c;">TYPE</div><div style="position:absolute;left:2893px;top:1081px;width:98px;height:40px;background:#426cad;border-radius:9px;"></div><div style="position:absolute;left:2904.50px;top:1086.15px;font-family:'Liberation Sans', sans-serif;font-size:29px;line-height:29px;color:#f4f4f5;white-space:pre;letter-spacing:-0.225px;-webkit-text-stroke:0.3px #f4f4f5;">Chain</div>
</div></body></html>
